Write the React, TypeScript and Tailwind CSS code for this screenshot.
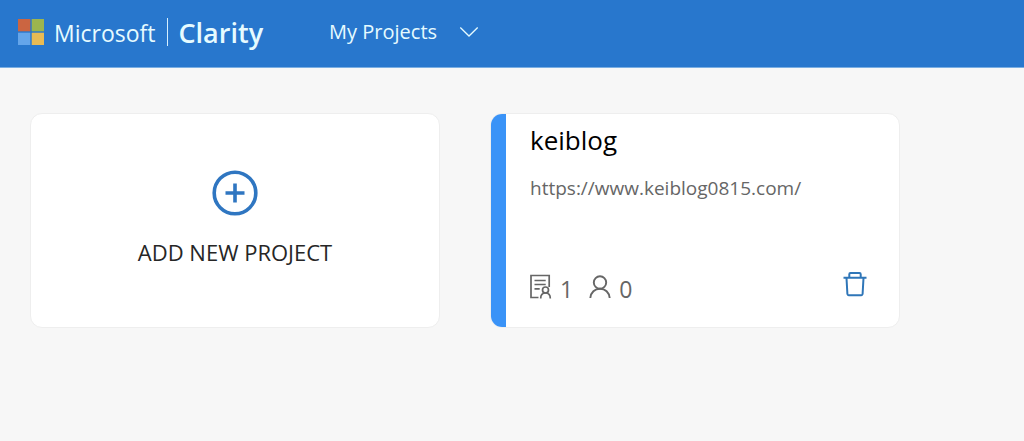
function MicrosoftLogo() {
  return (
    <svg width="26" height="26" viewBox="0 0 26 26" aria-hidden="true">
      <path d="M0 0h12.3v12.3H0z" fill="#cb6541" />
      <path d="M13.7 0H26v12.3H13.7z" fill="#9cb54e" />
      <path d="M0 13.7h12.3V26H0z" fill="#64a5ea" />
      <path d="M13.7 13.7H26V26H13.7z" fill="#e8bb54" />
    </svg>
  );
}

function Header() {
  return (
    <header className="flex h-[68px] items-center border-b border-[#7aaee2] bg-[#2877cd] px-[18px] pb-1 text-[#e6fbff]">
      <a href="#" className="flex items-center">
        <MicrosoftLogo />
        <span className="ml-[10px] pt-0.5 text-[23px] leading-8">Microsoft</span>
        <span className="ml-3 h-7 w-px bg-[#d5efff]" />
        <span className="ml-[10px] pt-0.5 text-[27px] leading-8 font-semibold">Clarity</span>
      </a>
      <button type="button" className="ml-[66px] flex items-center gap-[22px] text-[20px] leading-8">
        My Projects
        <svg width="20" height="12" viewBox="0 0 20 12" fill="none" stroke="currentColor" strokeWidth="1.3" aria-hidden="true">
          <path d="M1.3 1.5 10 10l8.700-8.500" />
        </svg>
      </button>
    </header>
  );
}

function AddProjectCard() {
  return (
    <button
      type="button"
      className="flex h-[215px] flex-col items-center rounded-xl border border-[#eeeeee] bg-white pt-14 text-[#262626]"
    >
      <svg width="46" height="46" viewBox="0 0 46 46" fill="none" stroke="#2f76c1" strokeWidth="3.600" aria-hidden="true">
        <circle cx="23" cy="23" r="20.800" />
        <path d="M23 13.500v19M13.500 23h19" />
      </svg>
      <span className="mt-5 text-[22px] leading-8">ADD NEW PROJECT</span>
    </button>
  );
}

function PagesIcon() {
  return (
    <svg width="22" height="26" viewBox="0 0 22 26" fill="none" stroke="currentColor" strokeWidth="1.700" role="img" aria-label="Pages">
      <path d="M8.500 23.500H1V1.500h18.200V13" />
      <path d="M4.500 6.500h11.200M4.500 10.500h11.200M4.500 14.800h5.200" />
      <circle cx="15.500" cy="16" r="3" />
      <path d="M10.700 24.500c0-3.500 2-5.500 4.800-5.500s4.800 2 4.800 5.500" />
    </svg>
  );
}

function UserIcon() {
  return (
    <svg width="22" height="26" viewBox="0 0 22 26" fill="none" stroke="currentColor" strokeWidth="1.900" role="img" aria-label="Users">
      <circle cx="11" cy="8.500" r="6.200" />
      <path d="M1.300 24c.5-5.500 4.500-9.300 9.700-9.300s9.200 3.800 9.700 9.300" />
    </svg>
  );
}

function TrashIcon() {
  return (
    <svg width="24" height="26" viewBox="0 0 24 26" fill="none" stroke="#2f76b8" strokeWidth="2" strokeLinejoin="round" aria-hidden="true">
      <path d="M.5 6.800h23" />
      <path d="M6.300 6.500V3.200q0-1.200 1.200-1.200h9q1.200 0 1.200 1.200v3.300" />
      <path d="M3.500 7l.9 16q.1 1.200 1.200 1.200h12.800q1.100 0 1.200-1.200L20.500 7" />
    </svg>
  );
}

function ProjectCard() {
  return (
    <article className="flex h-[215px] overflow-hidden rounded-xl border border-[#eeeeee] bg-white">
      <div className="w-[15px] shrink-0 bg-[#3a93f7]" />
      <div className="flex min-w-0 flex-1 flex-col pr-8 pb-6 pl-6">
        <h2 className="mt-2 text-[26px] leading-9 text-black">keiblog</h2>
        <a href="https://www.keiblog0815.com/" className="mt-4 text-[19px] leading-7 text-[#666666]">
          https://www.keiblog0815.com/
        </a>
        <div className="mt-auto flex items-center text-[#666666]">
          <PagesIcon />
          <span className="ml-2 pt-1 text-[23px] leading-7">1</span>
          <span className="ml-4 flex">
            <UserIcon />
          </span>
          <span className="ml-2 pt-1 text-[23px] leading-7">0</span>
          <button type="button" aria-label="Delete project" className="ml-auto self-start">
            <TrashIcon />
          </button>
        </div>
      </div>
    </article>
  );
}

export default function App() {
  return (
    <div className="min-h-screen bg-[#f7f7f7] font-['Open_Sans','Noto_Sans',sans-serif]">
      <Header />
      <main className="grid grid-cols-[repeat(auto-fill,minmax(0,410px))] gap-[50px] px-[30px] py-[45px]">
        <AddProjectCard />
        <ProjectCard />
      </main>
    </div>
  );
}
